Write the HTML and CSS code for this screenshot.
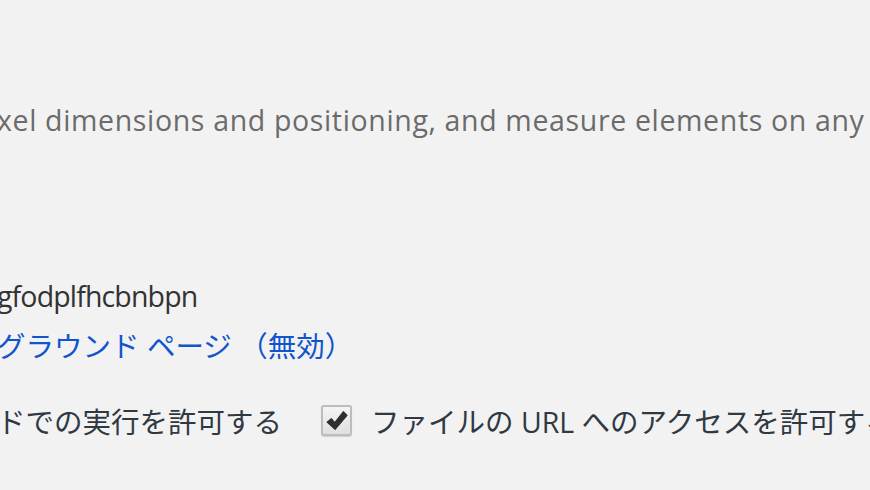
FILE: index.html
```html
<!DOCTYPE html>
<html lang="ja">
<head>
    <meta charset="UTF-8">
    <title>拡張機能</title>
    <link rel="stylesheet" href="styles.css">
</head>
<body>
    <div class="extension">
        <p class="description">xel dimensions and positioning, and measure elements on any</p>
        <div class="details">
            <div class="ext-id">gfodplfhcbnbpn</div>
            <div class="inspect"><a href="#">グラウンド ページ （無効）</a></div>
            <div class="options">
                <label class="option">ドでの実行を許可する</label>
                <label class="option">
                    <span class="checkbox">
                        <svg viewBox="0 0 20 20" width="23" height="23"><path d="M1.8 11.5 L5.5 8.3 L8.5 11.8 L16 2.3 L19.2 5.5 L8.8 17.8 Z" fill="#2e2e2e" stroke="#2e2e2e" stroke-width="0.9" stroke-linejoin="round"/></svg>
                    </span>
                    <span>ファイルの URL へのアクセスを許可する</span>
                </label>
            </div>
        </div>
    </div>
</body>
</html>
```

FILE: styles.css
```css
html, body {
    margin: 0;
    padding: 0;
}
body {
    background-color: #f2f2f2;
    font-family: "Open Sans", "Noto Sans CJK JP", sans-serif;
    font-size: 28.5px;
    color: #303942;
    width: 870px;
    height: 490px;
    overflow: hidden;
}
.extension {
    margin-left: -3px;
    padding-top: 100px;
    white-space: nowrap;
}
.description {
    margin: 0;
    color: #6b6b6b;
    line-height: 40px;
    letter-spacing: 0.65px;
}
.details {
    margin-top: 136px;
}
.ext-id {
    line-height: 40px;
    color: #333;
    letter-spacing: -0.85px;
}
.inspect {
    line-height: 40px;
    margin-top: 10px;
}
.inspect a {
    color: #1155cc;
    text-decoration: none;
}
.options {
    display: flex;
    align-items: center;
    gap: 39px;
    margin-top: 34px;
}
.option {
    display: flex;
    align-items: center;
    gap: 19px;
}
.checkbox {
    width: 31px;
    height: 31px;
    box-sizing: border-box;
    border: 2px solid #bdbdbd;
    border-radius: 3px;
    background: linear-gradient(#f4f4f4, #e0e0e0);
    box-shadow: 0 1px 1px rgba(0, 0, 0, 0.15);
    display: flex;
    align-items: center;
    justify-content: center;
}
```
